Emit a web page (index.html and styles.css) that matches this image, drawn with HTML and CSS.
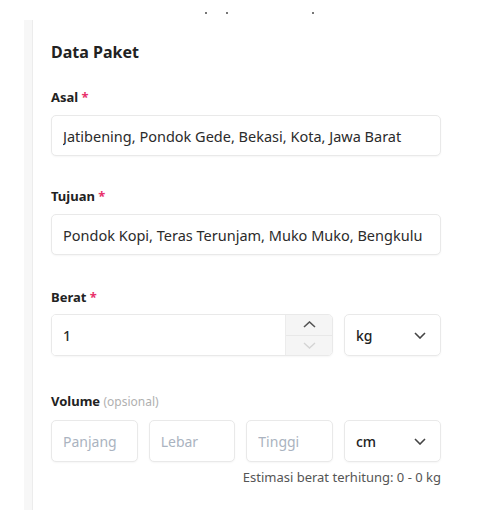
FILE: index.html
```html
<!DOCTYPE html>
<html lang="id">
<head>
  <meta charset="UTF-8">
  <title>Data Paket</title>
  <link rel="stylesheet" href="styles.css">
</head>
<body>
  <div class="topline">
    <span class="dot d1"></span><span class="dot d2"></span><span class="dot d3"></span>
  </div>

  <div class="layout">
    <div class="strip"></div>

    <form class="panel">
      <h2 class="title">Data Paket</h2>

      <div class="field f-asal">
        <label class="label" for="asal">Asal <span class="req">*</span></label>
        <input class="input" id="asal" type="text" value="Jatibening, Pondok Gede, Bekasi, Kota, Jawa Barat">
      </div>

      <div class="field f-tujuan">
        <label class="label" for="tujuan">Tujuan <span class="req">*</span></label>
        <input class="input" id="tujuan" type="text" value="Pondok Kopi, Teras Terunjam, Muko Muko, Bengkulu">
      </div>

      <div class="field f-berat">
        <label class="label" for="berat">Berat <span class="req">*</span></label>
        <div class="row">
          <div class="number span3">
            <input class="number-input" id="berat" type="text" value="1">
            <div class="spinner">
              <span class="spin up">
                <svg width="13" height="7" viewBox="0 0 13 7"><path d="M1 6L6.5 1L12 6" fill="none" stroke="#555" stroke-width="1.6"/></svg>
              </span>
              <span class="spin down">
                <svg width="13" height="7" viewBox="0 0 13 7"><path d="M1 1L6.5 6L12 1" fill="none" stroke="#d4d4d4" stroke-width="1.4"/></svg>
              </span>
            </div>
          </div>
          <div class="select">
            <span>kg</span>
            <svg width="12" height="7" viewBox="0 0 12 7"><path d="M1 1L6 6L11 1" fill="none" stroke="#444" stroke-width="1.6"/></svg>
          </div>
        </div>
      </div>

      <div class="field f-volume">
        <label class="label">Volume <span class="opt">(opsional)</span></label>
        <div class="row">
          <input class="input" type="text" placeholder="Panjang">
          <input class="input" type="text" placeholder="Lebar">
          <input class="input" type="text" placeholder="Tinggi">
          <div class="select">
            <span>cm</span>
            <svg width="12" height="7" viewBox="0 0 12 7"><path d="M1 1L6 6L11 1" fill="none" stroke="#444" stroke-width="1.6"/></svg>
          </div>
        </div>
        <p class="hint">Estimasi berat terhitung: 0 - 0 kg</p>
      </div>
    </form>
  </div>
</body>
</html>
```

FILE: styles.css
```css
body {
  margin: 0;
  background: #fff;
  font-family: "Noto Sans", "Open Sans", sans-serif;
  color: #222;
}
.topline {
  height: 20px;
  display: flex;
  align-items: flex-start;
}
.dot {
  width: 2px;
  height: 2px;
  margin-top: 12px;
  background: #777;
}
.d1 { margin-left: 205px; }
.d2 { margin-left: 19px; }
.d3 { margin-left: 84px; }

.layout {
  display: flex;
}
.strip {
  width: 8px;
  margin-left: 24px;
  background: #f7f7f7;
  border-right: 1px solid #ececec;
}
.panel {
  width: 390px;
  padding: 21px 0 25px 18px;
}
.title {
  margin: 0 0 25px;
  font-size: 16px;
  line-height: 22px;
  font-weight: 700;
  color: #222;
}
.label {
  display: block;
  margin-bottom: 9px;
  font-size: 13px;
  line-height: 18px;
  font-weight: 700;
  color: #222;
}
.req {
  color: #e8316b;
}
.opt {
  font-size: 12px;
  font-weight: 400;
  color: #b0b0b0;
}
.f-tujuan { margin-top: 31px; }
.f-berat { margin-top: 33px; }
.f-berat .label { margin-bottom: 8px; }
.f-volume { margin-top: 36px; }

.input {
  box-sizing: border-box;
  display: block;
  width: 100%;
  height: 41px;
  padding: 0 11px;
  border: 1px solid #e9e9e9;
  border-radius: 5px;
  box-shadow: 0 1px 2px rgba(0, 0, 0, 0.04);
  font-family: inherit;
  font-size: 14.5px;
  color: #2b2b2b;
  outline: none;
}
.input::placeholder {
  color: #aab3c0;
}
.row {
  display: grid;
  grid-template-columns: repeat(3, 1fr) 97px;
  gap: 11px;
}
.row .input {
  height: 42px;
  font-size: 14px;
}
.span3 {
  grid-column: span 3;
}
.number {
  display: flex;
  height: 42px;
  box-sizing: border-box;
  border: 1px solid #e9e9e9;
  border-radius: 5px;
  overflow: hidden;
  box-shadow: 0 1px 2px rgba(0, 0, 0, 0.04);
}
.number-input {
  flex: 1;
  min-width: 0;
  border: none;
  padding: 0 11px;
  font-family: inherit;
  font-size: 14px;
  font-weight: 500;
  color: #2b2b2b;
  outline: none;
}
.spinner {
  width: 46px;
  display: flex;
  flex-direction: column;
  background: #f5f5f5;
  border-left: 1px solid #ececec;
}
.spin {
  flex: 1;
  display: flex;
  align-items: center;
  justify-content: center;
}
.spin.up {
  border-bottom: 1px solid #e8e8e8;
}
.select {
  box-sizing: border-box;
  height: 42px;
  display: flex;
  align-items: center;
  justify-content: space-between;
  padding: 0 14px 0 11px;
  border: 1px solid #e9e9e9;
  border-radius: 5px;
  box-shadow: 0 1px 2px rgba(0, 0, 0, 0.04);
  font-size: 14px;
  font-weight: 500;
  color: #222;
}
.hint {
  margin: 7px 0 0;
  text-align: right;
  font-size: 13px;
  line-height: 16px;
  color: #555;
}
```
